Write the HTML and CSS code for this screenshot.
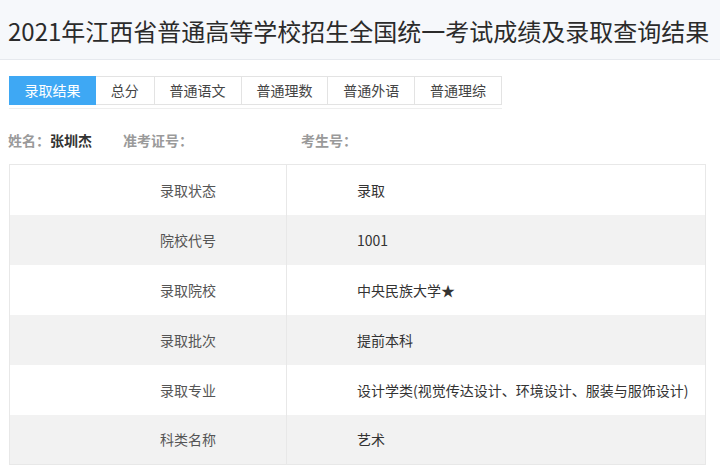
FILE: index.html
```html
<!DOCTYPE html>
<html lang="zh">
<head>
<meta charset="utf-8">
<link rel="stylesheet" href="styles.css">
</head>
<body>
<header class="head">
  <h1 class="title">2021年江西省普通高等学校招生全国统一考试成绩及录取查询结果</h1>
</header>
<main class="main">
  <nav class="tabs">
    <span class="tab active">录取结果</span>
    <span class="tab">总分</span>
    <span class="tab">普通语文</span>
    <span class="tab">普通理数</span>
    <span class="tab">普通外语</span>
    <span class="tab">普通理综</span>
  </nav>
  <div class="info">
    <span class="field"><span class="lbl">姓名：</span><span class="val">张圳杰</span></span>
    <span class="field f2"><span class="lbl">准考证号：</span></span>
    <span class="field f3"><span class="lbl">考生号：</span></span>
  </div>
  <table class="grid">
    <tr><td class="k">录取状态</td><td class="v">录取</td></tr>
    <tr><td class="k">院校代号</td><td class="v">1001</td></tr>
    <tr><td class="k">录取院校</td><td class="v">中央民族大学★</td></tr>
    <tr><td class="k">录取批次</td><td class="v">提前本科</td></tr>
    <tr><td class="k">录取专业</td><td class="v">设计学类(视觉传达设计、环境设计、服装与服饰设计)</td></tr>
    <tr><td class="k">科类名称</td><td class="v">艺术</td></tr>
  </table>
</main>
</body>
</html>
```
FILE: styles.css
```css
html, body {
  margin: 0;
  padding: 0;
  background: #fff;
  font-family: "Noto Sans CJK SC", "Noto Sans", sans-serif;
  color: #333;
  overflow: hidden;
}
.head {
  background: #f6f8fb;
  border-bottom: 1px solid #e6e9ee;
  height: 59px;
  display: flex;
  align-items: center;
  padding-left: 8px;
}
.title {
  margin: 0;
  font-size: 24px;
  font-weight: normal;
  color: #2b2b2b;
  white-space: nowrap;
  line-height: 30px;
  margin-top: 2px;
}
.main {
  padding: 16px 15px 0 9px;
}
.tabs {
  display: flex;
  width: 493px;
  border-bottom: 1px solid #eeeeee;
  padding-bottom: 3px;
}
.tab {
  height: 27px;
  line-height: 27px;
  border: 1px solid #e3e3e3;
  border-left: none;
  font-size: 14px;
  color: #444;
  text-align: center;
  width: 86px;
}
.tab:nth-child(2) { width: 58px; }
.tab:first-child {
  border-left: 1px solid #e3e3e3;
}
.tab.active {
  background: #3ea8f4;
  border-color: #3ea8f4;
  color: #fff;
  width: 85px;
}
.info {
  display: flex;
  font-size: 14px;
  font-weight: bold;
  color: #9a9a9a;
  margin-left: -1px;
  margin-top: 21px;
  height: 20px;
  line-height: 20px;
}
.val { color: #333; }
.field { width: 115px; }
.f2 { width: 178px; }
.grid {
  margin-top: 14px;
  width: 697px;
  border-collapse: collapse;
  border: 1px solid #e8e8e8;
  font-size: 14px;
}
.grid tr { height: 50px; }
.grid tr:nth-child(even) { background: #f2f2f2; }
.grid td {
  border: 1px solid #e8e8e8;
  border-top: none;
  border-bottom: none;
  padding: 0;
}
.k {
  width: 206px;
  text-align: right;
  padding-right: 70px !important;
  color: #555;
}
.v {
  padding-left: 70px !important;
  color: #333;
}
```
